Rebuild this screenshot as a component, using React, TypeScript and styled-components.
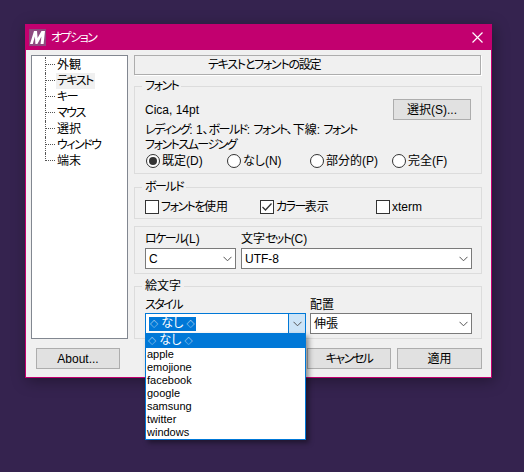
import styled, { createGlobalStyle } from 'styled-components';

const GlobalStyle = createGlobalStyle`
  html, body {
    margin: 0;
    padding: 0;
    background: #35234f;
  }
  body {
    font-family: "Liberation Sans", "Noto Sans CJK JP", sans-serif;
    font-size: 12px;
    font-feature-settings: "palt";
    color: #000;
  }
  * { box-sizing: border-box; }
`;

const Desktop = styled.div`
  width: 524px;
  height: 472px;
  padding: 24px 0 0 25px;
  overflow: hidden;
  background: #35234f;
`;

const Window = styled.div`
  width: 467px;
  height: 354px;
  background: #f0f0f0;
  border: 1px solid #c2006f;
  border-top: 0;
  box-shadow: 2px 3px 14px rgba(0, 0, 0, 0.35);
`;

const TitleBar = styled.div`
  height: 26px;
  display: flex;
  align-items: center;
  gap: 5px;
  padding: 0 8px 0 3px;
  background: #c2006f;
  color: #fff;
`;

const TitleText = styled.span`
  flex: 1;
  padding-top: 1px;
  line-height: 16px;
`;

const Body = styled.div`
  display: grid;
  grid-template-columns: 97px 348px;
  column-gap: 6px;
  padding: 5px 0 0 5px;
`;

const Tree = styled.ul`
  height: 284px;
  margin: 0;
  padding: 1px 0 0 13px;
  list-style: none;
  background: #fff;
  border: 1px solid #828790;
`;

const TreeRow = styled.li`
  display: flex;
  align-items: center;
  height: 16px;
  line-height: 16px;
`;

const Connector = styled.span<{ $last?: boolean }>`
  width: 10px;
  height: ${({ $last }) => ($last ? '8px' : '16px')};
  align-self: flex-start;
  margin-right: 1px;
  border-left: 1px dotted #555;
  background: linear-gradient(90deg, #555 50%, transparent 50%) 0 7px / 2px 1px repeat-x;
`;

const TreeLabel = styled.span<{ $selected?: boolean }>`
  padding: 0 2px 0 1px;
  background: ${({ $selected }) => ($selected ? '#f0f0f0' : 'transparent')};
`;

const Main = styled.div`
  display: flex;
  flex-direction: column;
`;

const PageHeader = styled.div`
  height: 20px;
  margin-right: 1px;
  padding-left: 73px;
  line-height: 18px;
  letter-spacing: -1.25px;
  background: #f0f0f0;
  border: 1px solid #adadad;
  box-shadow: 1px 1px 0 #fff;
`;

const Group = styled.fieldset<{ $top: number }>`
  margin: ${({ $top }) => $top}px 0 0;
  padding: 0 10px;
  min-width: 0;
  border: 1px solid #dcdcdc;
`;

const GroupTitle = styled.legend`
  margin-left: -3px;
  padding: 0 3px;
  font-size: 12px;
  line-height: 14px;
`;

const FontHead = styled.div`
  display: flex;
  align-items: center;
  justify-content: space-between;
  height: 21px;
  margin-top: 6px;
`;

const LeadingLine = styled.div`
  height: 15px;
  margin-top: 3px;
  line-height: 15px;
`;

const SmoothingLine = styled.div`
  height: 15px;
  line-height: 15px;
`;

const Button = styled.button<{ $width: number }>`
  width: ${({ $width }) => $width}px;
  height: 21px;
  padding: 0;
  font: inherit;
  line-height: 18px;
  color: #000;
  background: #e1e1e1;
  border: 1px solid #adadad;
`;

const RadioRow = styled.div`
  display: grid;
  grid-template-columns: 81px 83px 82px 1fr;
  height: 16px;
  margin: 0 0 4px 1px;
`;

const Choice = styled.label`
  display: flex;
  align-items: center;
  gap: 2px;
  line-height: 16px;
`;

const RadioDot = styled.span<{ $on?: boolean }>`
  position: relative;
  width: 14px;
  height: 14px;
  border: 1px solid #333;
  border-radius: 50%;
  background: #fff;
  &::after {
    content: '';
    display: ${({ $on }) => ($on ? 'block' : 'none')};
    position: absolute;
    inset: 2px;
    border-radius: 50%;
    background: #333;
  }
`;

const CheckRow = styled.div`
  display: grid;
  grid-template-columns: 115px 116px 1fr;
  height: 16px;
  margin: 5px 0 3px 0;
`;

const CheckBox = styled.span`
  display: flex;
  align-items: center;
  justify-content: center;
  width: 14px;
  height: 14px;
  background: #fff;
  border: 1px solid #333;
`;

const FieldRow = styled.div<{ $columns: string; $gap: number; $bottom: number }>`
  display: grid;
  grid-template-columns: ${({ $columns }) => $columns};
  column-gap: ${({ $gap }) => $gap}px;
  padding: 5px 0 ${({ $bottom }) => $bottom}px;
`;

const Field = styled.div`
  position: relative;
  min-width: 0;
`;

const FieldLabel = styled.div<{ $height: number }>`
  height: ${({ $height }) => $height}px;
  line-height: 15px;
`;

const Select = styled.div<{ $focused?: boolean }>`
  position: relative;
  display: flex;
  align-items: center;
  height: 21px;
  padding-left: 3px;
  background: #fff;
  border: 1px solid ${({ $focused }) => ($focused ? '#0078d7' : '#7a7a7a')};
`;

const SelectValue = styled.span<{ $highlight?: boolean }>`
  flex: 1;
  line-height: 12px;
  & > span {
    display: inline-block;
    padding: 0 1px;
    line-height: 13px;
    color: ${({ $highlight }) => ($highlight ? '#fff' : 'inherit')};
    background: ${({ $highlight }) => ($highlight ? '#0078d7' : 'transparent')};
  }
`;

const Arrow = styled.span<{ $focused?: boolean }>`
  display: flex;
  align-items: center;
  justify-content: center;
  width: 17px;
  align-self: stretch;
  background: ${({ $focused }) => ($focused ? '#cce4f7' : 'transparent')};
  border-left: 1px solid ${({ $focused }) => ($focused ? '#0078d7' : 'transparent')};
`;

const Diamond = styled.span`
  font-size: 8px;
`;

const DropList = styled.ul`
  position: absolute;
  top: 35px;
  left: 0;
  z-index: 5;
  width: 161px;
  margin: 0;
  padding: 0;
  list-style: none;
  background: #fff;
  border: 1px solid #0078d7;
  box-shadow: 3px 3px 5px rgba(0, 0, 0, 0.4);
`;

const DropItem = styled.li<{ $selected?: boolean }>`
  height: ${({ $selected }) => ($selected ? '14px' : '13px')};
  padding-left: ${({ $selected }) => ($selected ? '2px' : '1px')};
  font-size: ${({ $selected }) => ($selected ? '12px' : '11px')};
  line-height: 13px;
  color: ${({ $selected }) => ($selected ? '#fff' : '#000')};
  background: ${({ $selected }) => ($selected ? '#0078d7' : 'transparent')};
`;

const Footer = styled.div`
  display: flex;
  gap: 6px;
  justify-content: flex-end;
  padding: 9px 9px 0 10px;
`;

const FooterLeft = styled.div`
  flex: 1;
`;

// the original UI font has narrow kana, Noto's are too wide
const Kana = styled.span`
  letter-spacing: -1.5px;
`;

const Jp = ({ text }: { text: string }) => (
  <>
    {text.split(/([\u3040-\u30ff]+)/).map((part, i) =>
      i % 2 === 1 ? <Kana key={i}>{part}</Kana> : part,
    )}
  </>
);

const Logo = () => (
  <svg width="17" height="17" viewBox="0 0 17 17">
    <rect width="17" height="17" fill="#8f4a80" />
    <path d="M1 15 L5 2 H8 L8.6 9 L12.5 2 H16 L14.6 15 H11.6 L12.4 7.5 L8.4 15 H6.4 L5.9 7.5 L3.8 15 Z" fill="#fff" />
  </svg>
);

const CloseIcon = () => (
  <svg width="11" height="11" viewBox="0 0 11 11">
    <path d="M0.5 0.5 L10.5 10.5 M10.5 0.5 L0.5 10.5" stroke="#fff" strokeWidth="1.2" fill="none" />
  </svg>
);

const Chevron = () => (
  <svg width="9" height="6" viewBox="0 0 9 6">
    <path d="M0.5 0.8 L4.5 4.8 L8.5 0.8" stroke="#555" strokeWidth="1" fill="none" />
  </svg>
);

const CheckMark = () => (
  <svg width="12" height="12" viewBox="0 0 12 12">
    <path d="M1.5 6 L4.5 9 L10.5 2.5" stroke="#333" strokeWidth="1.3" fill="none" />
  </svg>
);

const NoneLabel = () => (
  <>
    <Diamond>◇</Diamond> なし <Diamond>◇</Diamond>
  </>
);

const pages = ['外観', 'テキスト', 'キー', 'マウス', '選択', 'ウィンドウ', '端末'];
const emojiStyles = ['apple', 'emojione', 'facebook', 'google', 'samsung', 'twitter', 'windows'];

const App = () => (
  <>
    <GlobalStyle />
    <Desktop>
      <Window>
        <TitleBar>
          <Logo />
          <TitleText><Jp text="オプション" /></TitleText>
          <CloseIcon />
        </TitleBar>
        <Body>
          <Tree>
            {pages.map((page, i) => (
              <TreeRow key={page}>
                <Connector $last={i === pages.length - 1} />
                <TreeLabel $selected={page === 'テキスト'}><Jp text={page} /></TreeLabel>
              </TreeRow>
            ))}
          </Tree>
          <Main>
            <PageHeader>テキストとフォントの設定</PageHeader>
            <Group $top={4}>
              <GroupTitle><Jp text="フォント" /></GroupTitle>
              <FontHead>
                <span>Cica, 14pt</span>
                <Button $width={78}>選択(S)...</Button>
              </FontHead>
              <LeadingLine><Jp text="レディング: 1、ボールド: フォント、下線: フォント" /></LeadingLine>
              <SmoothingLine><Jp text="フォントスムージング" /></SmoothingLine>
              <RadioRow>
                <Choice><RadioDot $on />既定(D)</Choice>
                <Choice><RadioDot />なし(N)</Choice>
                <Choice><RadioDot />部分的(P)</Choice>
                <Choice><RadioDot />完全(F)</Choice>
              </RadioRow>
            </Group>
            <Group $top={6}>
              <GroupTitle><Jp text="ボールド" /></GroupTitle>
              <CheckRow>
                <Choice><CheckBox /><span><Jp text="フォントを使用" /></span></Choice>
                <Choice><CheckBox><CheckMark /></CheckBox><span><Jp text="カラー表示" /></span></Choice>
                <Choice><CheckBox />xterm</Choice>
              </CheckRow>
            </Group>
            <Group $top={7}>
              <FieldRow $columns="91px 231px" $gap={5} $bottom={4}>
                <Field>
                  <FieldLabel $height={16}><Jp text="ロケール(L)" /></FieldLabel>
                  <Select>
                    <SelectValue>C</SelectValue>
                    <Arrow><Chevron /></Arrow>
                  </Select>
                </Field>
                <Field>
                  <FieldLabel $height={16}><Jp text="文字セット(C)" /></FieldLabel>
                  <Select>
                    <SelectValue>UTF-8</SelectValue>
                    <Arrow><Chevron /></Arrow>
                  </Select>
                </Field>
              </FieldRow>
            </Group>
            <Group $top={5}>
              <GroupTitle>絵文字</GroupTitle>
              <FieldRow $columns="161px 162px" $gap={4} $bottom={4}>
                <Field>
                  <FieldLabel $height={15}><Jp text="スタイル" /></FieldLabel>
                  <Select $focused>
                    <SelectValue $highlight><span><NoneLabel /></span></SelectValue>
                    <Arrow $focused><Chevron /></Arrow>
                  </Select>
                  <DropList>
                    <DropItem $selected><NoneLabel /></DropItem>
                    {emojiStyles.map((name) => (
                      <DropItem key={name}>{name}</DropItem>
                    ))}
                  </DropList>
                </Field>
                <Field>
                  <FieldLabel $height={15}>配置</FieldLabel>
                  <Select>
                    <SelectValue>伸張</SelectValue>
                    <Arrow><Chevron /></Arrow>
                  </Select>
                </Field>
              </FieldRow>
            </Group>
          </Main>
        </Body>
        <Footer>
          <FooterLeft><Button $width={84}>About...</Button></FooterLeft>
          <Button $width={84}>OK</Button>
          <Button $width={84}><Jp text="キャンセル" /></Button>
          <Button $width={85}>適用</Button>
        </Footer>
      </Window>
    </Desktop>
  </>
);

export default App;
